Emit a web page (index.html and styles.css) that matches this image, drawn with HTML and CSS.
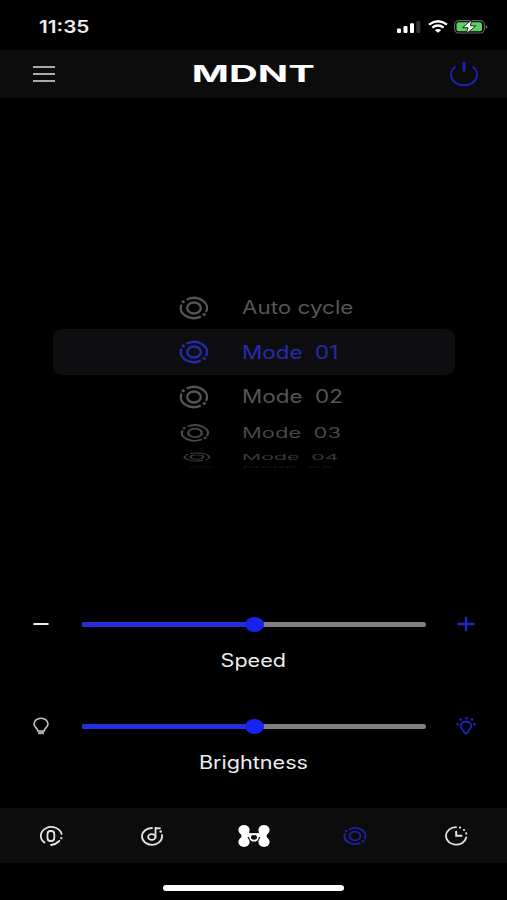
FILE: index.html
```html
<!DOCTYPE html>
<html lang="en">
<head>
  <meta charset="utf-8">
  <title>MDNT</title>
  <link rel="stylesheet" href="styles.css">
</head>
<body>
  <svg class="defs">
    <symbol id="rings" viewBox="0 0 30 24">
      <g fill="none" stroke="currentColor" stroke-width="2.300">
        <ellipse cx="15" cy="12" rx="6.800" ry="5.500"/>
        <path d="M8.500 3.300A13 10 0 0 1 27.300 15.200M2.300 9.500A13 10 0 0 0 21 20.900" stroke-linecap="round"/>
      </g>
      <g fill="currentColor">
        <ellipse cx="4.200" cy="5.800" rx="1.700" ry="1.500"/>
        <ellipse cx="25.200" cy="18.600" rx="1.700" ry="1.500"/>
      </g>
    </symbol>
  </svg>

  <div class="status">
    <span class="time">11:35</span>
    <div class="status-icons">
      <svg width="24" height="12" viewBox="0 0 24 12">
        <g fill="#fff">
          <rect x="0" y="7.500" width="4" height="4.500" rx="1"/>
          <rect x="6.500" y="5" width="4" height="7" rx="1"/>
          <rect x="13" y="2.200" width="4" height="9.800" rx="1"/>
        </g>
        <rect x="19.300" y="0" width="4" height="12" rx="1" fill="#333"/>
      </svg>
      <svg class="wifi" width="20" height="13" viewBox="0 0 20 13">
        <g fill="none" stroke="#fff" stroke-width="2.300">
          <path d="M1 4.600Q10-2.200 19 4.600"/>
          <path d="M4.300 7.700Q10 3.400 15.700 7.700"/>
        </g>
        <path d="M6.800 10.100Q10 7.700 13.200 10.100L10 12.800Z" fill="#fff"/>
      </svg>
      <svg class="battery" width="34" height="14" viewBox="0 0 34 14">
        <rect x=".6" y=".6" width="29.800" height="12.400" rx="4" fill="none" stroke="#666" stroke-width="1.100"/>
        <rect x="2.500" y="2.300" width="25.500" height="9" rx="2" fill="#5fd063"/>
        <path d="M31.700 5V9Q33.500 8.500 33.500 7T31.700 5" fill="#666"/>
        <path d="M17.500 0L8.500 7.700H14L12.500 13.500L21.800 5.900H16.500Z" fill="#fff" stroke="#000" stroke-width=".8"/>
      </svg>
    </div>
  </div>

  <div class="header">
    <div class="menu"><i></i><i></i><i></i></div>
    <svg class="logo" width="130" height="28" viewBox="0 0 130 28">
      <text x="3.800" y="22.300" textLength="123" lengthAdjust="spacingAndGlyphs">MDNT</text>
    </svg>
    <svg class="power" width="30" height="26" viewBox="0 0 30 26">
      <path d="M6.300 5.600C-1.800 11 1.500 24.300 15 24.300S31.800 11 23.700 5.600" fill="none" stroke="#1c24b4" stroke-width="2"/>
      <path d="M15 1V10.500" stroke="#1c24b4" stroke-width="3"/>
    </svg>
  </div>

  <div class="wheel">
    <div class="row"><svg class="ring"><use href="#rings"/></svg><span>Auto cycle</span></div>
    <div class="row selected"><svg class="ring"><use href="#rings"/></svg><span>Mode&nbsp; 01</span></div>
    <div class="row"><svg class="ring"><use href="#rings"/></svg><span>Mode&nbsp; 02</span></div>
    <div class="row tilt1"><svg class="ring"><use href="#rings"/></svg><span>Mode&nbsp; 03</span></div>
    <div class="row tilt2"><svg class="ring"><use href="#rings"/></svg><span>Mode&nbsp; 04</span></div>
    <div class="row tilt3"><svg class="ring"><use href="#rings"/></svg><span>Mode&nbsp; 05</span></div>
  </div>

  <div class="control">
    <div class="slider">
      <svg width="16" height="20" viewBox="0 0 16 20"><path d="M1.300 10H14.700" stroke="#eee" stroke-width="2.200" stroke-linecap="round"/></svg>
      <div class="track"><div class="fill"></div><div class="thumb"></div></div>
      <svg width="20" height="20" viewBox="0 0 20 20"><path d="M2.500 10H17.500M10 3.700V16.300" stroke="#1c27cc" stroke-width="2.400" stroke-linecap="round"/></svg>
    </div>
    <div class="label">Speed</div>
  </div>

  <div class="control">
    <div class="slider">
      <svg width="16" height="20" viewBox="0 0 16 20">
        <path d="M4.700 14.500C4.700 12 1 11.500 1 8A7 5.800 0 0 1 15 8C15 11.500 11.300 12 11.300 14.500V15H4.700Z" fill="none" stroke="#c4c4c4" stroke-width="1.600"/>
        <path d="M5 15.500H11V18.200H5Z" fill="#aaa"/>
      </svg>
      <div class="track"><div class="fill"></div><div class="thumb"></div></div>
      <svg width="20" height="20" viewBox="0 0 20 20">
        <path d="M8 16.200C8 14 4.600 12.800 4.600 9.800C4.600 4.100 15.400 4.100 15.400 9.800C15.400 12.800 12 14 12 16.200L10 17.800Z" fill="none" stroke="#1c27cc" stroke-width="1.700" stroke-linejoin="round"/>
        <g fill="#1c27cc">
          <circle cx="1.500" cy="8.300" r="1.200"/><circle cx="4.600" cy="3.500" r="1.200"/><circle cx="10.500" cy="2.200" r="1.200"/><circle cx="16" cy="3.500" r="1.200"/><circle cx="18.500" cy="8.300" r="1.200"/>
        </g>
      </svg>
    </div>
    <div class="label">Brightness</div>
  </div>

  <div class="tabs">
    <svg width="24" height="22" viewBox="0 0 24 22">
      <g fill="none" stroke="#e4e4e4" stroke-width="1.800">
        <path d="M5.500 17.500A10.500 8.800 0 1 1 22.600 9M12 20Q17 19.300 20.300 16" stroke-linecap="round"/>
        <rect x="8.500" y="6" width="6.800" height="10" rx="3"/>
        <path d="M22.300 12.200V14.200" stroke-width="2"/>
      </g>
    </svg>
    <svg width="24" height="22" viewBox="0 0 24 22">
      <g fill="none" stroke="#e4e4e4" stroke-width="1.800" stroke-linecap="round">
        <path d="M12 3A10 8.400 0 1 0 22 11V10"/>
        <ellipse cx="11.800" cy="12" rx="3.700" ry="2.800"/>
        <path d="M15.500 12V3L20 3.300"/>
      </g>
      <circle cx="20.700" cy="6.500" r="1.300" fill="#e4e4e4"/>
    </svg>
    <svg class="logo-icon" width="34" height="24" viewBox="0 0 34 24">
      <g fill="#fff">
        <ellipse cx="7" cy="6" rx="5.600" ry="5"/><ellipse cx="27" cy="6" rx="5.600" ry="5"/>
        <ellipse cx="7" cy="18" rx="5.600" ry="5"/><ellipse cx="27" cy="18" rx="5.600" ry="5"/>
        <path d="M2.800 9C5 11 5 13 2.800 15L11.200 15C10 13 10.800 11.800 12.500 13.500L14.500 11C13 10.500 12 9 11.500 7ZM31.200 9C29 11 29 13 31.200 15L22.800 15C24 13 23.200 11.800 21.500 13.500L19.500 11C21 10.500 22 9 22.500 7Z"/>
      </g>
      <ellipse cx="17" cy="13.300" rx="3.900" ry="3.400" fill="#0c0c0c" stroke="#fff" stroke-width="1.800"/>
      <path d="M12.500 9.500Q17 11.500 21.500 9.500" fill="none" stroke="#fff" stroke-width="1.500"/>
    </svg>
    <svg class="active" width="24" height="20"><use href="#rings"/></svg>
    <svg width="24" height="22" viewBox="0 0 24 22">
      <g fill="none" stroke="#e4e4e4" stroke-width="1.800" stroke-linecap="round">
        <path d="M12 2.200A10.200 8.700 0 1 0 22.200 12.500"/>
        <path d="M12.200 6.800V10.800H17.500" stroke-width="2"/>
      </g>
      <g fill="#e4e4e4"><circle cx="16" cy="2.600" r="1.100"/><circle cx="20" cy="5" r="1.100"/><circle cx="22.200" cy="8.400" r="1.100"/></g>
    </svg>
  </div>
  <div class="home"></div>
</body>
</html>
```
FILE: styles.css
```css
* {
  box-sizing: border-box;
}
body {
  margin: 0;
  width: 507px;
  height: 900px;
  overflow: hidden;
  background: #000;
  color: #eee;
  font-family: Inter, "Liberation Sans", sans-serif;
  display: flex;
  flex-direction: column;
}
svg {
  display: block;
  flex: none;
}
.defs {
  position: absolute;
  width: 0;
  height: 0;
}

/* status bar */
.status {
  height: 50px;
  padding: 3px 19px 0 39px;
  display: flex;
  justify-content: space-between;
  align-items: center;
}
.time {
  font-size: 17px;
  font-weight: 600;
  transform: scaleX(1.22);
  transform-origin: left;
}
.status-icons {
  display: flex;
  align-items: center;
}
.wifi {
  margin-left: 7px;
}
.battery {
  margin-left: 6px;
}

/* header */
.header {
  height: 48px;
  padding: 0 28px 0 33px;
  background: #0c0c0c;
  display: grid;
  grid-template-columns: 1fr auto 1fr;
  align-items: center;
}
.menu {
  width: 22px;
  display: flex;
  flex-direction: column;
  gap: 5px;
}
.menu i {
  height: 2px;
  background: #aaa;
}
.logo {
  margin-left: -6px;
}
.logo text {
  font-size: 22.5px;
  font-weight: 700;
  fill: #fff;
}
.power {
  justify-self: end;
}

/* mode picker */
.wheel {
  height: 515px;
  padding: 188px 52px 0 53px;
  color: #555;
}
.row {
  height: 43px;
  padding-left: 126px;
  display: flex;
  align-items: center;
  font-size: 18px;
}
.row span {
  margin-left: 33px;
  transform: scaleX(1.245);
  transform-origin: left;
}
.ring {
  width: 30px;
  height: 24px;
}
.selected {
  height: 46px;
  border-radius: 9px;
  background: #0e0e10;
  color: #242bb0;
}
.tilt1 {
  height: 29px;
  transform: scaleY(.77);
  color: #484848;
}
.tilt1 .ring {
  margin: 0 -1px 0 1px;
}
.tilt1 span {
  transform: scaleX(1.22);
}
.tilt2 {
  height: 20px;
  transform: scaleY(.42);
  color: #3a3a3a;
}
.tilt2 .ring {
  width: 28px;
  margin: 0 -2px 0 4px;
}
.tilt2 span {
  transform: scaleX(1.18);
}
.tilt3 {
  height: 28px;
  margin-top: -14px;
  transform: scaleY(.13);
  color: #181818;
}
.tilt3 .ring {
  width: 24px;
  margin: 0 -4px 0 10px;
}
.tilt3 span {
  transform: scaleX(1.12);
}

/* sliders */
.control {
  height: 102px;
}
.slider {
  height: 22px;
  padding: 0 31px 0 33px;
  display: flex;
  align-items: center;
}
.track {
  position: relative;
  width: 344px;
  height: 5px;
  margin: 0 30px 0 33px;
  border-radius: 3px;
  background: #808080;
}
.fill {
  width: 50%;
  height: 5px;
  border-radius: 3px;
  background: #2430dd;
}
.thumb {
  position: absolute;
  left: 163px;
  top: -5px;
  width: 19px;
  height: 15px;
  border-radius: 50%;
  background: #1722ee;
}
.label {
  width: fit-content;
  margin: 14px auto 0;
  font-size: 18px;
  line-height: 24px;
  transform: scaleX(1.2);
}

/* tab bar */
.tabs {
  height: 55px;
  margin-top: -9px;
  background: #0c0c0c;
  display: grid;
  grid-template-columns: repeat(5, 1fr);
  align-items: center;
  justify-items: center;
}
.logo-icon {
  margin-left: 1px;
}
.active {
  color: #1b22a8;
}
.home {
  width: 181px;
  height: 6px;
  margin: 22px auto 0;
  border-radius: 3px;
  background: #fff;
}
```
